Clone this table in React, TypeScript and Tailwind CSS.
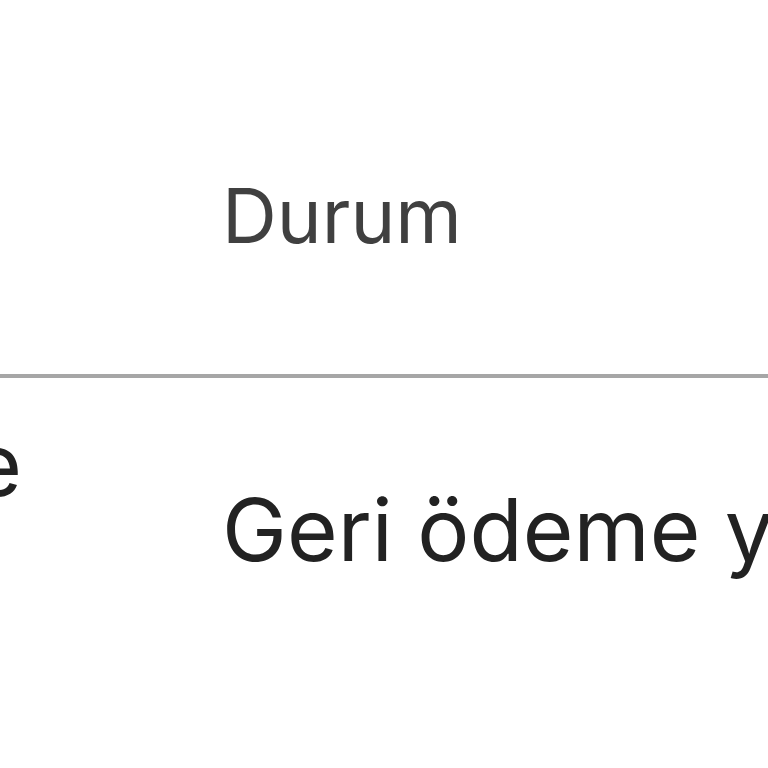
export default function App() {
  return (
    <div
      className="h-[768px] w-[768px] overflow-hidden bg-white"
      style={{ fontFamily: 'Inter, "Noto Sans", sans-serif' }}
    >
      <div className="flex border-b-[4px] border-[#a6a6a6]">
        <div className="w-[222px] shrink-0" />
        <div className="pt-[158px] pb-[102px] text-[76px] leading-[114px] text-[#404040] whitespace-nowrap">
          Durum
        </div>
      </div>
      <div className="flex">
        <div className="w-[222px] shrink-0 overflow-hidden pt-[22px]">
          <div className="ml-[-778px] w-[800px] text-right text-[87px] leading-[130px] text-[#222222]">
            <div className="whitespace-nowrap">İşlem türüne</div>
          </div>
        </div>
        <div className="pt-[87px] text-[87px] leading-[130px] text-[#222222] whitespace-nowrap">
          Geri ödeme yapıldı
        </div>
      </div>
    </div>
  );
}
